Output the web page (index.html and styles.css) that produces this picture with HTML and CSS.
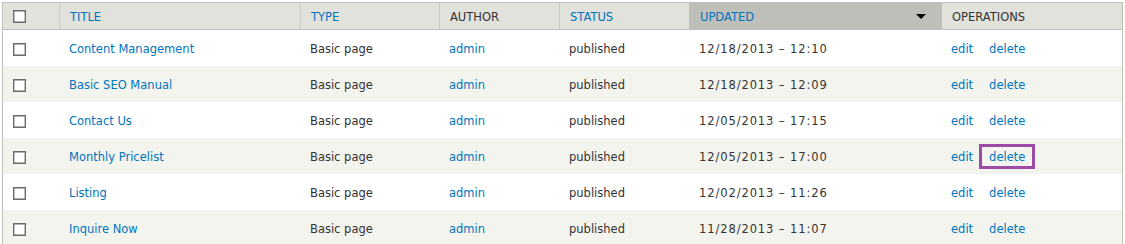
FILE: index.html
```html
<!DOCTYPE html>
<html>
<head>
<meta charset="utf-8">
<link rel="stylesheet" href="styles.css">
</head>
<body>
<table class="content-table">
  <thead>
    <tr>
      <th class="c-check"><input type="checkbox" class="cb"></th>
      <th class="c-title"><a href="#">Title</a></th>
      <th class="c-type"><a href="#">Type</a></th>
      <th class="c-author">Author</th>
      <th class="c-status"><a href="#">Status</a></th>
      <th class="c-updated active"><div class="sort-head"><a href="#">Updated</a><span class="arrow"></span></div></th>
      <th class="c-ops">Operations</th>
    </tr>
  </thead>
  <tbody>
    <tr>
      <td class="c-check"><input type="checkbox" class="cb"></td>
      <td><a href="#">Content Management</a></td>
      <td>Basic page</td>
      <td><a href="#">admin</a></td>
      <td>published</td>
      <td class="date">12/18/2013 – 12:10</td>
      <td><a href="#" class="op">edit</a><a href="#">delete</a></td>
    </tr>
    <tr class="even">
      <td class="c-check"><input type="checkbox" class="cb"></td>
      <td><a href="#">Basic SEO Manual</a></td>
      <td>Basic page</td>
      <td><a href="#">admin</a></td>
      <td>published</td>
      <td class="date">12/18/2013 – 12:09</td>
      <td><a href="#" class="op">edit</a><a href="#">delete</a></td>
    </tr>
    <tr>
      <td class="c-check"><input type="checkbox" class="cb"></td>
      <td><a href="#">Contact Us</a></td>
      <td>Basic page</td>
      <td><a href="#">admin</a></td>
      <td>published</td>
      <td class="date">12/05/2013 – 17:15</td>
      <td><a href="#" class="op">edit</a><a href="#">delete</a></td>
    </tr>
    <tr class="even">
      <td class="c-check"><input type="checkbox" class="cb"></td>
      <td><a href="#">Monthly Pricelist</a></td>
      <td>Basic page</td>
      <td><a href="#">admin</a></td>
      <td>published</td>
      <td class="date">12/05/2013 – 17:00</td>
      <td><a href="#" class="op">edit</a><a href="#" class="focused">delete</a></td>
    </tr>
    <tr>
      <td class="c-check"><input type="checkbox" class="cb"></td>
      <td><a href="#">Listing</a></td>
      <td>Basic page</td>
      <td><a href="#">admin</a></td>
      <td>published</td>
      <td class="date">12/02/2013 – 11:26</td>
      <td><a href="#" class="op">edit</a><a href="#">delete</a></td>
    </tr>
    <tr class="even">
      <td class="c-check"><input type="checkbox" class="cb"></td>
      <td><a href="#">Inquire Now</a></td>
      <td>Basic page</td>
      <td><a href="#">admin</a></td>
      <td>published</td>
      <td class="date">11/28/2013 – 11:07</td>
      <td><a href="#" class="op">edit</a><a href="#">delete</a></td>
    </tr>
  </tbody>
</table>
</body>
</html>
```
FILE: styles.css
```css
html, body {
  background: #ffffff;
}
body {
  margin: 2px;
  font-family: "DejaVu Sans", Verdana, sans-serif;
  font-size: 11.5px;
  color: #333333;
}
a {
  color: #0074bd;
  text-decoration: none;
}
.content-table {
  width: 1121px;
  table-layout: fixed;
  border-collapse: separate;
  border-spacing: 0;
  border: 1px solid #bebfb9;
}
.content-table th,
.content-table td {
  box-sizing: border-box;
  text-align: left;
  white-space: nowrap;
  overflow: visible;
}
.content-table th {
  height: 27px;
  padding: 2px 10px 0 10px;
  background: #e1e2dc;
  border-bottom: 1px solid #bebfb9;
  border-right: 1px solid #c9cac4;
  font-weight: normal;
  text-transform: uppercase;
  color: #333333;
}
.content-table th.c-ops {
  border-right: none;
}
.content-table th.c-status {
  border-right-color: #bebfb9;
}
.content-table th.active {
  background: #bebfb9;
  border-right-color: #bebfb9;
}
.c-check { width: 57px; }
.c-title { width: 241px; }
.c-type { width: 139px; }
.c-author { width: 120px; }
.c-status { width: 130px; }
.c-updated { width: 252px; }
.c-ops { width: 180px; }
.sort-head {
  display: flex;
  align-items: center;
  justify-content: space-between;
}
.arrow {
  width: 0;
  height: 0;
  border-left: 5px solid transparent;
  border-right: 5px solid transparent;
  border-top: 5px solid #000000;
  margin-right: 5px;
  margin-top: -1px;
}
.content-table td {
  height: 36px;
  padding: 2px 9px 0 9px;
}
.content-table td.date {
  letter-spacing: 0.9px;
}
.content-table th.c-check {
  padding: 0 0 0 10px;
}
.content-table td.c-check {
  padding: 2px 0 0 10px;
}
.content-table tr.even td {
  background: #f3f4ee;
}
.cb {
  appearance: none;
  -webkit-appearance: none;
  display: block;
  width: 13px;
  height: 13px;
  margin: 1px 0 0 0;
  box-sizing: border-box;
  border: 1px solid #6b6b6b;
  box-shadow: inset 0 0 0 0.4px #6b6b6b;
  background: #ffffff;
  border-radius: 0;
}
.op {
  margin-right: 16px;
}
.focused {
  outline: 3px solid #9c4ca6;
  outline-offset: 2px;
  padding: 1px 5px 0 5px;
  margin: 0 -5px;
}
```
